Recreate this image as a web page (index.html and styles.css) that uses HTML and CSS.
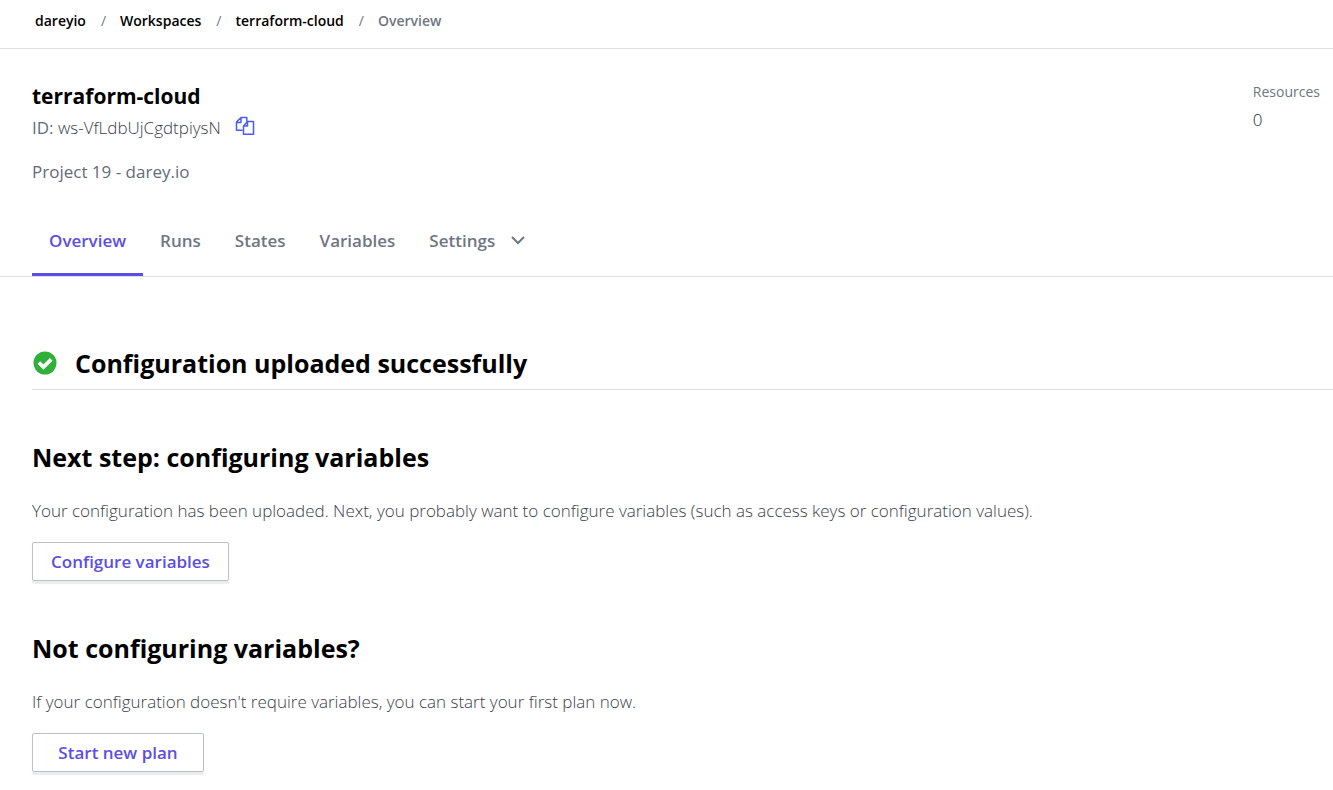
FILE: index.html
```html
<!DOCTYPE html>
<html lang="en">
<head>
<meta charset="utf-8">
<meta name="viewport" content="width=device-width, initial-scale=1">
<title>terraform-cloud - Overview</title>
<link rel="stylesheet" href="styles.css">
</head>
<body>
<nav class="breadcrumbs" aria-label="Breadcrumb">
  <a href="#">dareyio</a><span class="slash">/</span>
  <a href="#">Workspaces</a><span class="slash">/</span>
  <a href="#">terraform-cloud</a><span class="slash">/</span>
  <span class="current">Overview</span>
</nav>
<header class="workspace">
  <div class="summary">
    <div class="identity">
      <h1 class="name">terraform-cloud</h1>
      <div class="id-row">
        <p class="id"><span class="id-label">ID:</span> ws-VfLdbUjCgdtpiysN</p>
        <button class="copy" type="button" aria-label="Copy workspace ID">
          <svg width="20" height="20" viewBox="0 0 20 20" fill="none" stroke="currentColor" stroke-width="1.5" stroke-linejoin="round"><path d="M7.5 14.2H1.5V6L6 1.5h5.8v4M1.5 6.500H6V1.500M8.500 10l4-4.500h6V18.200h-10zM8.500 10h4V5.500"/></svg>
        </button>
      </div>
      <p class="project">Project 19 - darey.io</p>
    </div>
    <dl class="resources">
      <dt>Resources</dt>
      <dd>0</dd>
    </dl>
  </div>
  <nav class="tabs" aria-label="Workspace">
    <a class="tab active" href="#" aria-current="page">Overview</a>
    <a class="tab" href="#">Runs</a>
    <a class="tab" href="#">States</a>
    <a class="tab" href="#">Variables</a>
    <button class="tab" type="button" aria-haspopup="true">Settings
      <svg class="chevron" width="14" height="9" viewBox="0 0 14 9" fill="none" stroke="currentColor" stroke-width="2"><path d="M1 1l6 6 6-6"/></svg>
    </button>
  </nav>
</header>
<main class="content">
  <h2 class="heading status">
    <svg width="25" height="24" viewBox="0 0 25 24" aria-hidden="true"><circle cx="13" cy="12" r="11.500" fill="#2eb039"/><path d="M6.800 11.500l4.600 4.600 7.800-7.800" fill="none" stroke="#fff" stroke-width="3.800"/></svg>
    Configuration uploaded successfully
  </h2>
  <section class="step">
    <h2 class="heading">Next step: configuring variables</h2>
    <p class="text">Your configuration has been uploaded. Next, you probably want to configure variables (such as access keys or configuration values).</p>
    <button class="button" type="button">Configure variables</button>
  </section>
  <section class="step">
    <h2 class="heading">Not configuring variables?</h2>
    <p class="text">If your configuration doesn't require variables, you can start your first plan now.</p>
    <button class="button" type="button">Start new plan</button>
  </section>
</main>
</body>
</html>
```

FILE: styles.css
```css
* { box-sizing: border-box; }
body, h1, h2, p, dl, dd { margin: 0; }
body {
  background: #fff;
  color: #3c4048;
  font: 300 17px/24px "Open Sans", "Noto Sans", sans-serif;
}
a { color: inherit; text-decoration: none; }
button { font: inherit; color: inherit; background: none; border: 0; padding: 0; cursor: pointer; }
svg { display: block; flex: none; }

.breadcrumbs {
  display: flex;
  align-items: center;
  padding: 9px 35px 15px;
  border-bottom: 1px solid #dcdee7;
  color: #000;
  font-size: 14px;
  font-weight: 600;
}
.slash { margin: 0 14px 0 15px; color: #6f7682; font-weight: 400; }
.current { color: #6f7682; }

.workspace { padding: 31px 0 0 32px; border-bottom: 1px solid #dcdee7; }
.summary { display: flex; justify-content: space-between; }
.name { color: #000; font-size: 21px; line-height: 32px; font-weight: 700; }
.id-row { display: flex; align-items: center; gap: 14px; height: 31px; }
.id-label, .project { color: #646b77; font-weight: 400; }
.copy { color: #4a5cf5; padding-bottom: 4px; }
.project { margin-top: 17px; }
.resources { padding: 1px 13px 0 0; }
.resources dt { font-size: 14px; line-height: 22px; font-weight: 400; color: #6f7682; }
.resources dd { margin-top: 5px; color: #252937; }

.tabs { display: flex; margin-top: 24px; }
.tab {
  display: flex;
  align-items: center;
  gap: 16px;
  height: 68px;
  padding: 0 17px;
  border-bottom: 3px solid transparent;
  color: #6f7682;
  font-weight: 600;
}
.tab.active { color: #5c4ee5; border-color: #5c4ee5; }

.content { padding: 68px 0 16px 32px; }
.heading { color: #000; font-size: 25px; line-height: 36px; font-weight: 700; }
.status {
  display: flex;
  align-items: center;
  gap: 18px;
  padding-bottom: 8px;
  border-bottom: 1px solid #dcdee7;
}
.step { margin-top: 49px; }
.text { margin: 24px 0 19px; }
.button {
  min-width: 172px;
  height: 39px;
  padding: 0 18px;
  border: 1px solid #bac1cc;
  border-radius: 2px;
  box-shadow: 0 3px 1px rgba(0, 0, 0, 0.08);
  color: #5c4ee5;
  font-weight: 600;
}
```
